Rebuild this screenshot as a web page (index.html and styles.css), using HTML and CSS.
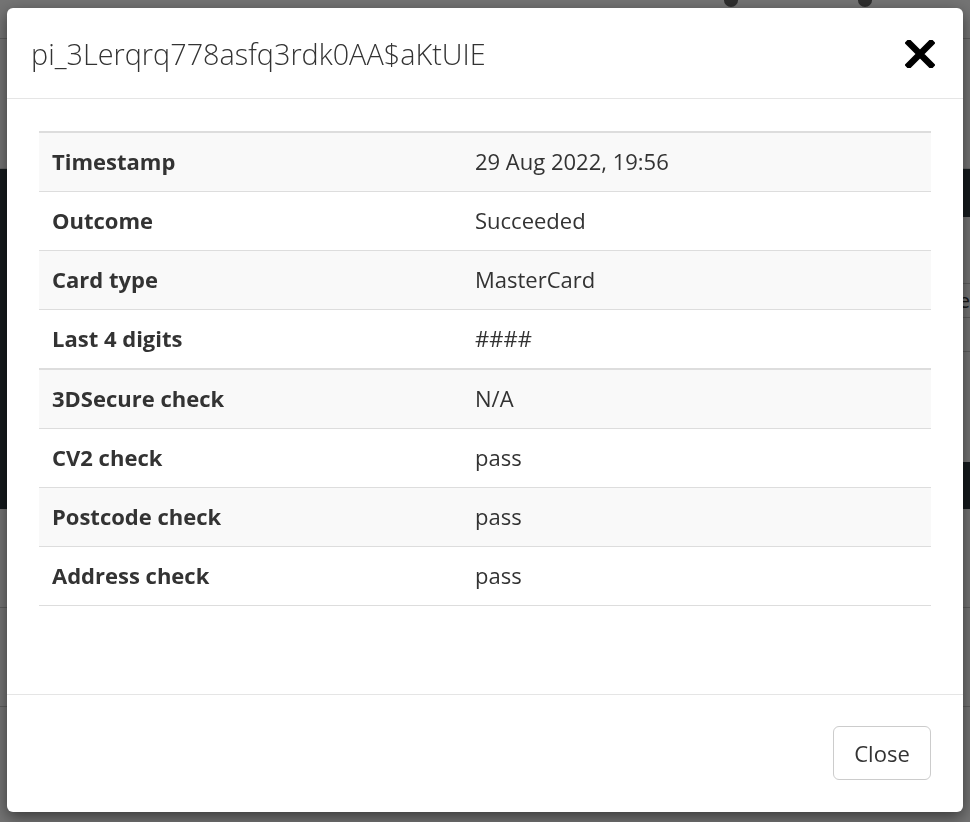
FILE: index.html
```html
<!DOCTYPE html>
<html lang="en">
<head>
    <meta charset="UTF-8">
    <meta name="viewport" content="width=device-width, initial-scale=1.0">
    <title>Payment details</title>
    <link rel="stylesheet" href="styles.css">
</head>
<body>
    <div class="page">
        <div class="topbar">
            <span class="top-icon icon-a"></span>
            <span class="top-icon icon-b"></span>
        </div>
        <div class="sub-nav"></div>
        <div class="dark-section">
            <div class="inner">
                <div class="inner-row">Vie</div>
                <div class="inner-row"></div>
                <div class="inner-row"></div>
            </div>
        </div>
        <div class="page-row"></div>
        <div class="page-row"></div>
    </div>

    <div class="backdrop"></div>

    <div class="modal">
        <div class="modal-dialog">
            <div class="modal-header">
                <h4 class="modal-title">pi_3Lerqrq778asfq3rdk0AA$aKtUIE</h4>
                <button class="close" type="button" aria-label="Close">
                    <svg width="30" height="28" viewBox="0 0 30 28">
                        <path d="M4 3 L26 25 M26 3 L4 25" stroke="#000" stroke-width="6.5" stroke-linecap="square" fill="none"/>
                    </svg>
                </button>
            </div>
            <div class="modal-body">
                <table class="details">
                    <tbody>
                        <tr><th>Timestamp</th><td>29 Aug 2022, 19:56</td></tr>
                        <tr><th>Outcome</th><td>Succeeded</td></tr>
                        <tr><th>Card type</th><td>MasterCard</td></tr>
                        <tr><th>Last 4 digits</th><td>####</td></tr>
                    </tbody>
                    <tbody>
                        <tr><th>3DSecure check</th><td>N/A</td></tr>
                        <tr><th>CV2 check</th><td>pass</td></tr>
                        <tr><th>Postcode check</th><td>pass</td></tr>
                        <tr><th>Address check</th><td>pass</td></tr>
                    </tbody>
                </table>
            </div>
            <div class="modal-footer">
                <button class="btn" type="button">Close</button>
            </div>
        </div>
    </div>
</body>
</html>
```

FILE: styles.css
```css
body {
    margin: 0;
    font-family: "Open Sans", Arial, sans-serif;
    color: #333;
    background: #fff;
}

/* page behind the modal */
.page {
    height: 822px;
    overflow: hidden;
}

.topbar {
    height: 38px;
    border-bottom: 1px solid #ccc;
    position: relative;
}

.top-icon {
    position: absolute;
    top: -6px;
    width: 14px;
    height: 13px;
    border-radius: 50%;
    background: #666;
}

.icon-a {
    left: 724px;
}

.icon-b {
    left: 858px;
}

.sub-nav {
    height: 129px;
    border-bottom: 1px solid #ddd;
}

.dark-section {
    background: #2f3a40;
    padding: 48px 0 47px 7px;
}

.inner {
    background: #fff;
    height: 245px;
    padding-top: 66px;
    box-sizing: border-box;
}

.inner-row {
    height: 33px;
    border-top: 1px solid #ccc;
    text-align: right;
    font-size: 20px;
    line-height: 33px;
    color: #333;
}

.page-row {
    height: 98px;
    border-bottom: 1px solid #ccc;
}

.backdrop {
    position: fixed;
    inset: 0;
    background: rgba(0, 0, 0, 0.55);
}

/* modal */
.modal {
    position: fixed;
    inset: 0;
}

.modal-dialog {
    margin: 8px 7px;
    background: #fff;
    border-radius: 6px;
    box-shadow: 0 5px 15px rgba(0, 0, 0, 0.5);
}

.modal-header {
    height: 90px;
    display: flex;
    align-items: center;
    justify-content: space-between;
    padding: 0 28px 0 24px;
    border-bottom: 1px solid #e5e5e5;
}

.modal-title {
    margin: 0;
    font-size: 28.8px;
    font-weight: 300;
    color: #333;
}

.close {
    border: 0;
    background: none;
    padding: 0;
    margin-top: 2px;
    cursor: pointer;
    display: flex;
}

.modal-body {
    padding: 32px 32px 32px;
}

.details {
    width: 100%;
    border-collapse: collapse;
    margin-bottom: 56px;
    font-size: 22px;
}

.details th,
.details td {
    text-align: left;
    padding: 14px 13px 16px;
    line-height: 28px;
    border-top: 1px solid #ddd;
    vertical-align: top;
}

.details th {
    width: 397px;
    font-weight: 700;
}

.details tbody tr:first-child th,
.details tbody tr:first-child td {
    border-top-width: 2px;
}

.details tbody tr:nth-child(odd) {
    background: #f9f9f9;
}

.details tbody:last-child tr:last-child th,
.details tbody:last-child tr:last-child td {
    border-bottom: 1px solid #ddd;
}

.modal-footer {
    border-top: 1px solid #e5e5e5;
    padding: 31px 32px 32px;
    display: flex;
    justify-content: flex-end;
}

.btn {
    width: 98px;
    height: 54px;
    background: #fff;
    border: 1px solid #ccc;
    border-radius: 6px;
    font-family: "Open Sans", Arial, sans-serif;
    font-size: 22px;
    color: #333;
    cursor: pointer;
}
```
